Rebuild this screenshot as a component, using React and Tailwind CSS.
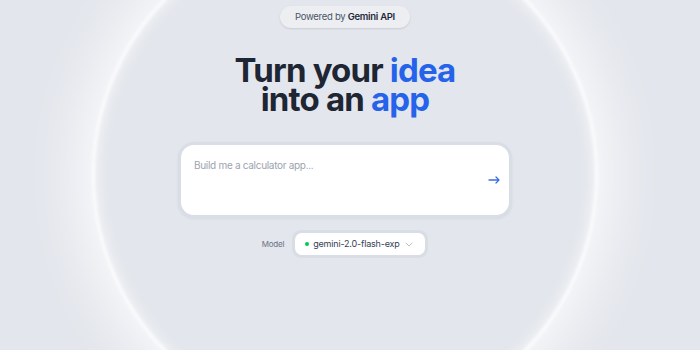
import React from "react";

export default function App() {
  return (
    <div className="relative h-[350px] w-[700px] overflow-hidden bg-[#e3e6ec]" style={{ fontFamily: "Inter, 'Noto Sans', sans-serif" }}>
      <div className="pointer-events-none absolute left-[92px] top-[-78px] h-[506px] w-[506px] rounded-full border-[3px] border-white/90 blur-[1.5px] shadow-[0_0_55px_14px_rgba(255,255,255,0.8),inset_0_0_16px_rgba(255,255,255,0.75)]" />
      <div className="relative flex w-[690px] flex-col items-center">
        <div className="mt-[6px] flex h-[22px] items-center rounded-full bg-[#eceef2] px-[15px] text-[9.5px] tracking-[-0.03em] text-gray-600 shadow-[0_1px_2px_rgba(0,0,0,0.12)]">
          Powered by&nbsp;<span className="font-semibold text-gray-800">Gemini API</span>
        </div>
        <h1 className="mt-[28px] flex flex-col items-center text-[33px] font-bold leading-[29px] tracking-[-0.025em] text-[#1e2533]">
          <span>Turn your <span className="text-[#2563eb]">idea</span></span>
          <span>into an <span className="text-[#2563eb]">app</span></span>
        </h1>
        <div className="mt-[28px] w-[334px] rounded-[16px] bg-[#d9dee6] p-[3px] shadow-[0_1px_3px_rgba(0,0,0,0.06)]">
          <div className="flex h-[70px] items-start justify-between rounded-[13px] bg-white pl-[13px] pr-[9px] pt-[13px]">
            <span className="text-[10px] leading-[15px] tracking-[-0.03em] text-[#9ca3af]">Build me a calculator app...</span>
            <svg className="mt-[18px]" width="12" height="8" viewBox="0 0 12 8" fill="none" stroke="#3b6fe0" strokeWidth="1.3" strokeLinecap="round" strokeLinejoin="round">
              <path d="M1 4h10M8 1l3 3-3 3" />
            </svg>
          </div>
        </div>
        <div className="mt-[12px] flex items-center gap-[8px]">
          <span className="text-[8px] tracking-[-0.03em] text-gray-500">Model</span>
          <div className="w-[136px] rounded-[9px] bg-[#d9dee6] p-[3px]">
            <div className="flex h-[22px] items-center rounded-[7px] bg-white pl-[10px] pr-[12px]">
              <span className="h-[4px] w-[4px] rounded-full bg-green-500" />
              <span className="ml-[4px] text-[9px] tracking-[-0.02em] text-gray-700">gemini-2.0-flash-exp</span>
              <svg className="ml-auto" width="8" height="5" viewBox="0 0 8 5" fill="none" stroke="#b4b9c2" strokeWidth="0.9" strokeLinecap="round" strokeLinejoin="round">
                <path d="M1 1l3 3 3-3" />
              </svg>
            </div>
          </div>
        </div>
      </div>
    </div>
  );
}
